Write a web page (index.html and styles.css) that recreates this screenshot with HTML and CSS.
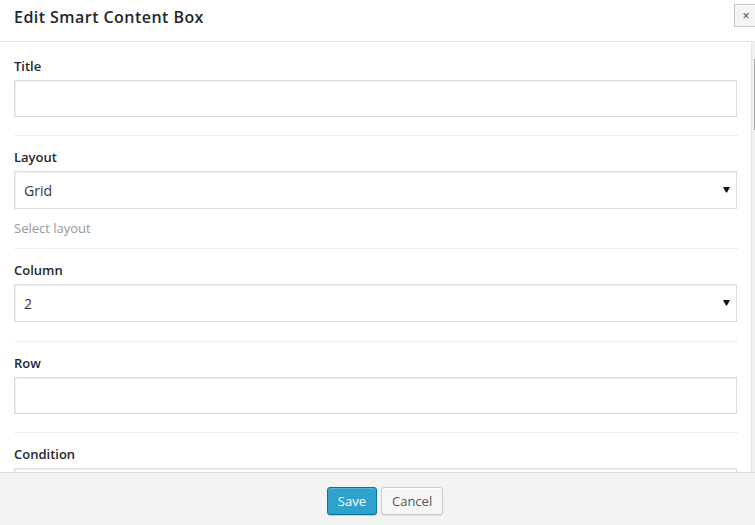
FILE: index.html
```html
<!DOCTYPE html>
<html lang="en">
<head>
<meta charset="utf-8">
<title>Edit Smart Content Box</title>
<link rel="stylesheet" href="styles.css">
</head>
<body>
<div class="dialog">
  <header class="dlg-head">
    <h1 class="dlg-title">Edit Smart Content Box</h1>
    <button class="dlg-close" type="button" aria-label="Close">×</button>
  </header>
  <div class="dlg-main">
    <div class="dlg-body">
      <div class="field">
        <label class="field-label">Title</label>
        <input class="text-input" type="text">
      </div>
      <div class="field has-help">
        <label class="field-label">Layout</label>
        <div class="select-wrap">
          <select class="select"><option>Grid</option><option>List</option></select>
          <svg class="caret" width="7" height="6" viewBox="0 0 7 6"><path d="M0 0H7L4 5.5H3Z" fill="#111"/></svg>
        </div>
        <p class="help">Select layout</p>
      </div>
      <div class="field has-select">
        <label class="field-label">Column</label>
        <div class="select-wrap">
          <select class="select"><option>2</option><option>3</option><option>4</option></select>
          <svg class="caret" width="7" height="6" viewBox="0 0 7 6"><path d="M0 0H7L4 5.5H3Z" fill="#111"/></svg>
        </div>
      </div>
      <div class="field">
        <label class="field-label">Row</label>
        <input class="text-input" type="text">
      </div>
      <div class="field">
        <label class="field-label">Condition</label>
        <input class="text-input" type="text">
      </div>
    </div>
    <div class="scrollbar" aria-hidden="true">
      <div class="scroll-thumb"></div>
    </div>
  </div>
  <footer class="dlg-foot">
    <button class="btn btn-primary" type="button">Save</button>
    <button class="btn" type="button">Cancel</button>
  </footer>
</div>
</body>
</html>
```
FILE: styles.css
```css
html, body {
  margin: 0;
  padding: 0;
  overflow: hidden;
  background: #fff;
}
body {
  font-family: "Open Sans", "Liberation Sans", sans-serif;
  color: #23282d;
}
.dialog {
  width: 768px;
  height: 525px;
  overflow: hidden;
  display: flex;
  flex-direction: column;
  background: #fff;
}
.dlg-head {
  position: relative;
  height: 41px;
  box-sizing: content-box;
  border-bottom: 1px solid #e5e5e5;
  padding: 0 14px;
  flex: none;
}
.dlg-title {
  margin: 0;
  padding-top: 7px;
  font-size: 16px;
  font-weight: 600;
  letter-spacing: 0.45px;
  line-height: 20px;
  color: #23282d;
}
.dlg-close {
  position: absolute;
  top: 4px;
  left: 734px;
  width: 24px;
  height: 23px;
  padding: 0;
  border: 1px solid #c4c4c4;
  background: #f4f4f4;
  box-shadow: inset 0 1px 0 #fff;
  font-family: "Liberation Sans", sans-serif;
  font-size: 12px;
  line-height: 20px;
  color: #444;
  text-align: center;
}
.dlg-main {
  flex: none;
  height: 430px;
  display: flex;
  overflow: hidden;
}
.dlg-body {
  flex: 1;
  min-width: 0;
  overflow: hidden;
  padding: 0 14px;
}
.scrollbar {
  flex: none;
  width: 17px;
  background: #f0f0f0;
  border-left: 1px solid #e6e6e6;
  box-sizing: border-box;
  padding-top: 17px;
}
.scroll-thumb {
  height: 71px;
  margin-left: 2px;
  background: #cdcdcd;
  box-shadow: inset 1px 0 0 #a6a6a6;
}
.field {
  padding: 12px 0 18px;
  border-bottom: 1px dotted #dcdcdc;
}
.field:first-child {
  padding-top: 15px;
}
.field.has-help {
  padding-bottom: 11px;
}
.field.has-select {
  padding-bottom: 19px;
}
.field-label {
  display: block;
  font-size: 13px;
  font-weight: 600;
  line-height: 18px;
  margin-bottom: 5px;
  color: #23282d;
}
.text-input,
.select {
  display: block;
  width: 100%;
  box-sizing: border-box;
  margin: 0;
  border: 1px solid #dcdcdc;
  box-shadow: inset 1px 1px 1px rgba(0, 0, 0, 0.07);
  background: #fff;
  border-radius: 0;
  outline: none;
  font-family: "Open Sans", "Liberation Sans", sans-serif;
  font-size: 14px;
  color: #32373c;
}
.text-input {
  height: 37px;
  padding: 0 10px;
}
.select-wrap {
  position: relative;
}
.select {
  height: 38px;
  padding: 0 24px 0 9px;
  -webkit-appearance: none;
  appearance: none;
}
.caret {
  position: absolute;
  right: 7px;
  top: 16px;
  display: block;
}
.help {
  margin: 10px 0 0;
  font-size: 13px;
  line-height: 18px;
  color: #999;
}
.dlg-foot {
  flex: none;
  height: 52px;
  box-sizing: content-box;
  border-top: 1px solid #dddddd;
  background: #f3f3f3;
  display: flex;
  justify-content: center;
  align-items: flex-start;
  gap: 4px;
  padding-left: 2px;
}
.btn {
  margin-top: 14px;
  height: 28px;
  padding: 0 10px;
  border: 1px solid #cccccc;
  border-radius: 3px;
  background: #f7f7f7;
  box-shadow: inset 0 1px 0 #fff, 0 1px 0 rgba(0, 0, 0, 0.08);
  font-family: "Open Sans", "Liberation Sans", sans-serif;
  font-size: 13px;
  line-height: 26px;
  color: #555;
}
.btn-primary {
  background: #2ea2cc;
  border-color: #0074a2;
  box-shadow: inset 0 1px 0 rgba(120, 200, 230, 0.5), 0 1px 0 rgba(0, 0, 0, 0.15);
  color: #fff;
}
```
